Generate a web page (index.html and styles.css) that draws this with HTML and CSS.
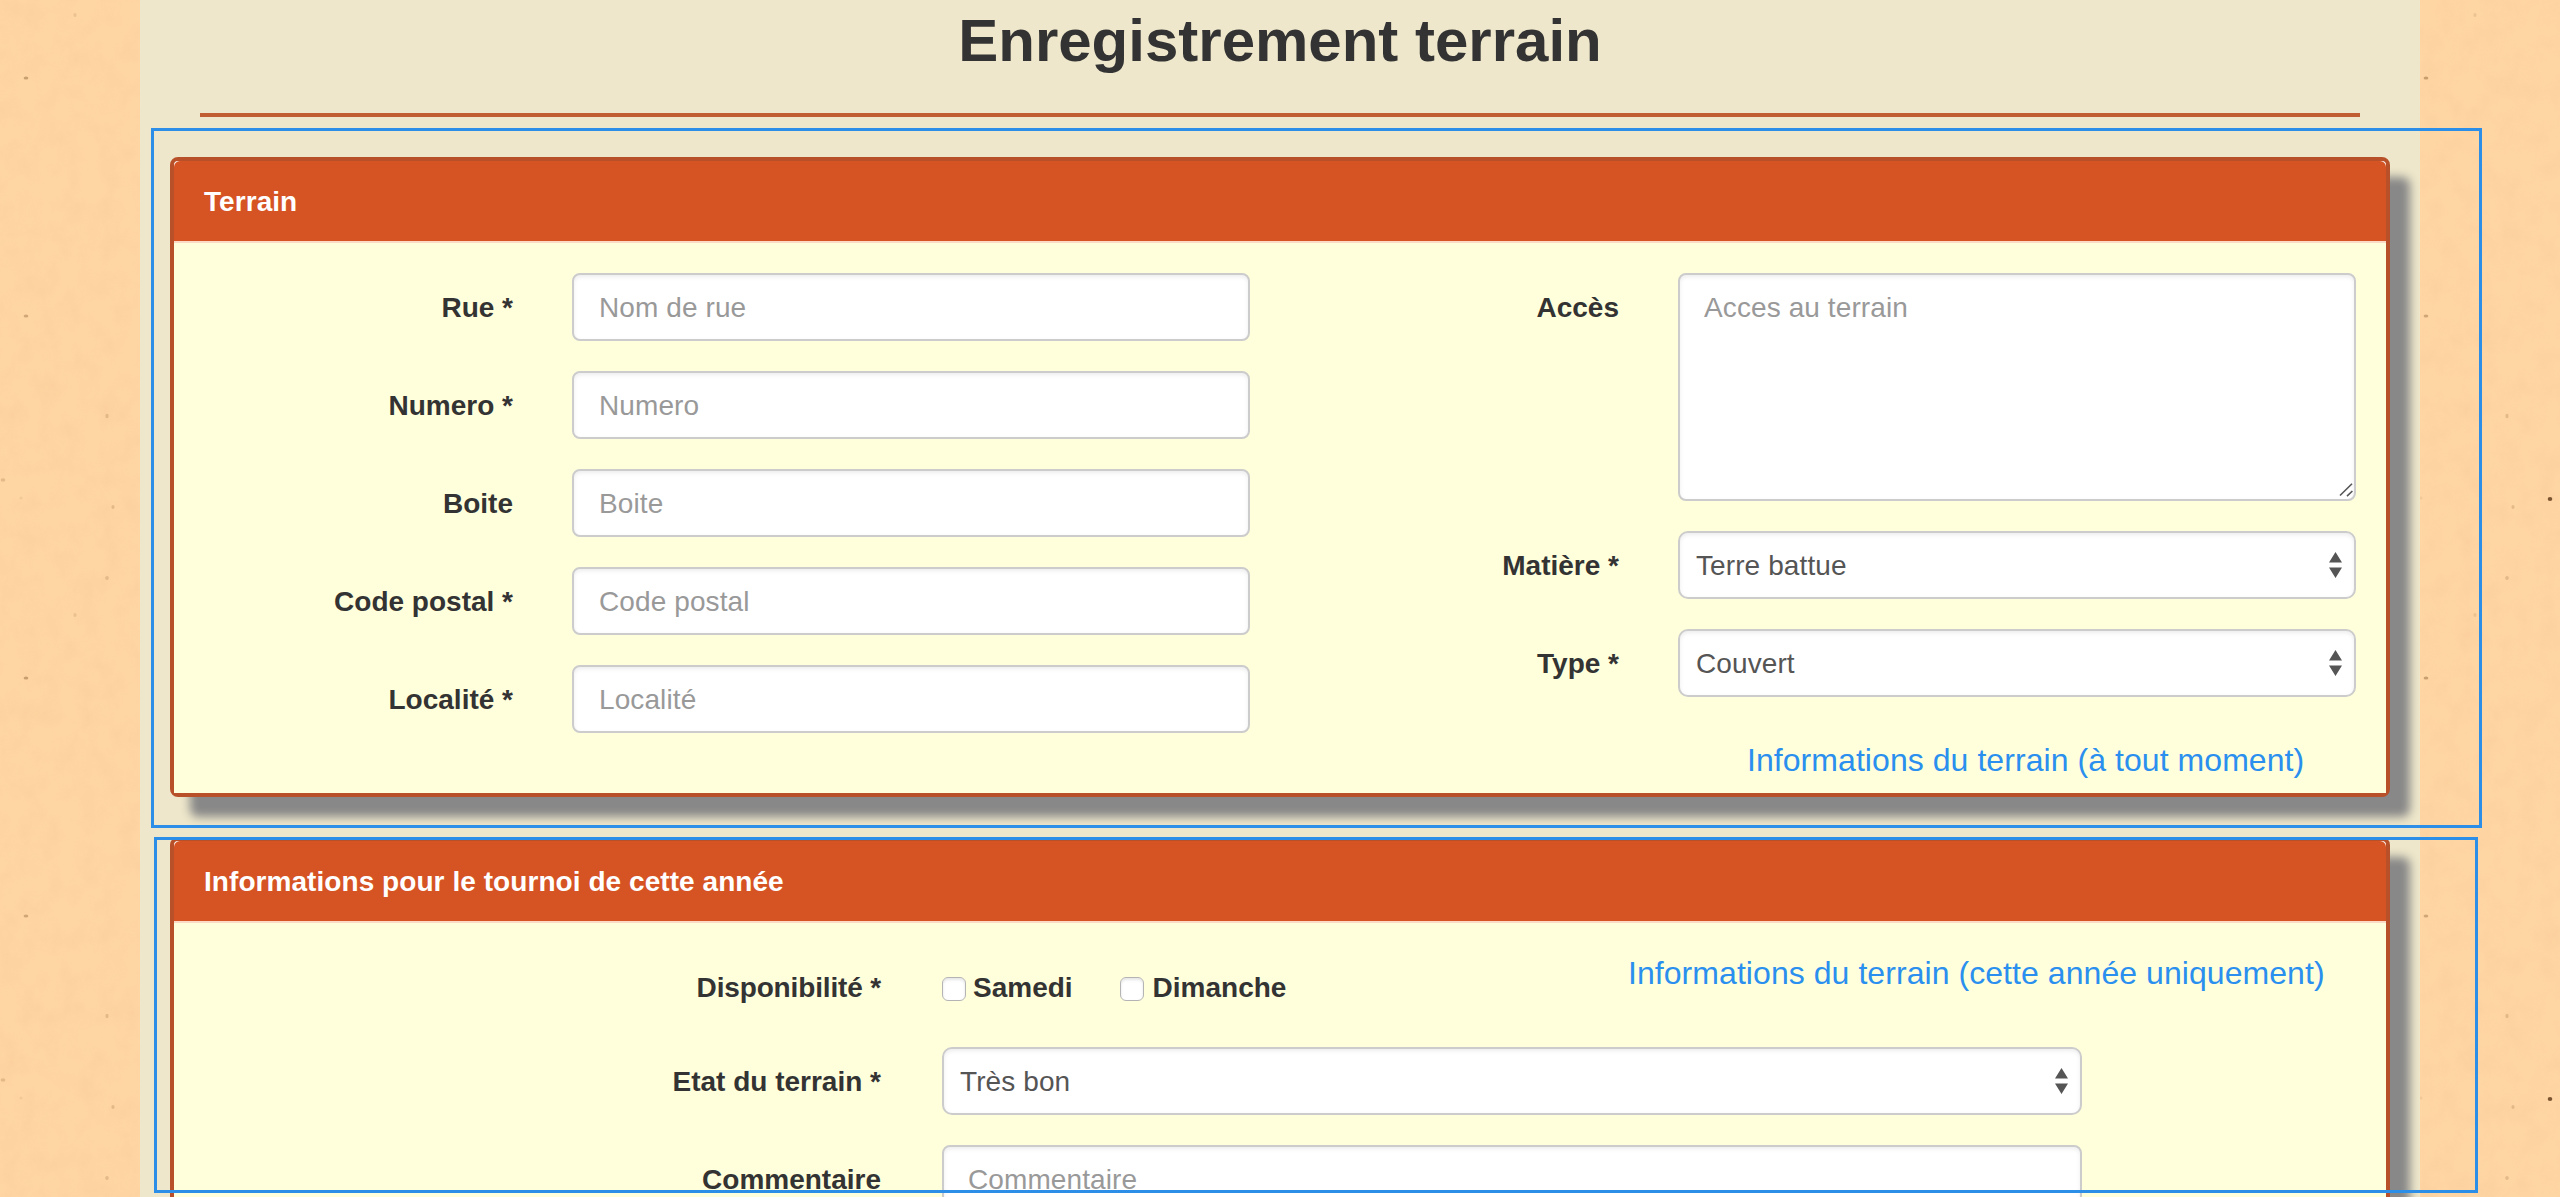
FILE: index.html
```html
<!DOCTYPE html>
<html lang="fr">
<head>
<meta charset="utf-8">
<title>Enregistrement terrain</title>
<link rel="stylesheet" href="styles.css">
</head>
<body>
<svg class="paper" width="2560" height="1197" aria-hidden="true">
  <defs>
    <filter id="grain" x="0" y="0" width="100%" height="100%" color-interpolation-filters="sRGB">
      <feTurbulence type="fractalNoise" baseFrequency="0.05 0.04" numOctaves="4" seed="8"/>
      <feColorMatrix values="0 0 0 0 0.92  0 0 0 0 0.66  0 0 0 0 0.46  1.1 0 0 0 -0.38"/>
    </filter>
    <pattern id="specks" width="2400" height="600" patternUnits="userSpaceOnUse">
      <g fill="#b3875a">
        <ellipse cx="26" cy="78" rx="2.4" ry="1.6" opacity=".7"/>
        <ellipse cx="26" cy="316" rx="2.4" ry="1.6" opacity=".6"/>
        <ellipse cx="107" cy="416" rx="1.6" ry="2.2" opacity=".35"/>
        <ellipse cx="3" cy="480" rx="2.4" ry="1.8" opacity=".35"/>
        <ellipse cx="113" cy="507" rx="1.6" ry="2" opacity=".35"/>
        <ellipse cx="107" cy="578" rx="1.8" ry="2" opacity=".35"/>
        <ellipse cx="75" cy="15" rx="1.6" ry="2" opacity=".25"/>
        <ellipse cx="21" cy="498" rx="1.6" ry="1.6" opacity=".15"/>
      </g>
      <ellipse cx="150" cy="499" rx="2.3" ry="2.1" fill="#7b5431"/>
    </pattern>
  </defs>
  <rect width="2560" height="1197" filter="url(#grain)" opacity=".17"/>
  <rect width="2560" height="1197" fill="url(#specks)"/>
</svg>

<main class="container">
  <h2 class="title"><span>Enregistrement terrain</span></h2>

  <section class="panel">
    <h3 class="panel-heading">Terrain</h3>
    <div class="panel-body two-columns">
      <div class="fields">
        <div class="field"><label for="rue">Rue *</label><input class="control" id="rue" placeholder="Nom de rue"></div>
        <div class="field"><label for="numero">Numero *</label><input class="control" id="numero" placeholder="Numero"></div>
        <div class="field"><label for="boite">Boite</label><input class="control" id="boite" placeholder="Boite"></div>
        <div class="field"><label for="cp">Code postal *</label><input class="control" id="cp" placeholder="Code postal"></div>
        <div class="field"><label for="localite">Localité *</label><input class="control" id="localite" placeholder="Localité"></div>
      </div>
      <div class="fields">
        <div class="field">
          <label for="acces">Accès</label>
          <div class="wrap">
            <textarea class="control area" id="acces" placeholder="Acces au terrain"></textarea>
            <svg class="grip" width="14" height="14" viewBox="0 0 14 14"><path d="M1 12.5 13 .8M8 13.2l5.4-5.2"/></svg>
          </div>
        </div>
        <div class="field">
          <label for="matiere">Matière *</label>
          <div class="wrap">
            <select class="control select" id="matiere"><option>Terre battue</option></select>
            <svg class="arrows" width="13" height="26" viewBox="0 0 13 26"><path d="M0 10.5 6.5 0 13 10.5zM0 15.500h13L6.500 26z"/></svg>
          </div>
        </div>
        <div class="field">
          <label for="type">Type *</label>
          <div class="wrap">
            <select class="control select" id="type"><option>Couvert</option></select>
            <svg class="arrows" width="13" height="26" viewBox="0 0 13 26"><path d="M0 10.5 6.5 0 13 10.5zM0 15.500h13L6.500 26z"/></svg>
          </div>
        </div>
      </div>
    </div>
  </section>

  <section class="panel">
    <h3 class="panel-heading">Informations pour le tournoi de cette année</h3>
    <div class="panel-body">
      <div class="fields wide">
        <div class="field checks">
          <span class="label">Disponibilité *</span>
          <div class="options">
            <label class="option"><input type="checkbox" class="box">Samedi</label>
            <label class="option sunday"><input type="checkbox" class="box">Dimanche</label>
          </div>
        </div>
        <div class="field">
          <label for="etat">Etat du terrain *</label>
          <div class="wrap">
            <select class="control select" id="etat"><option>Très bon</option></select>
            <svg class="arrows" width="13" height="26" viewBox="0 0 13 26"><path d="M0 10.5 6.5 0 13 10.5zM0 15.500h13L6.500 26z"/></svg>
          </div>
        </div>
        <div class="field">
          <label for="commentaire">Commentaire</label>
          <textarea class="control area" id="commentaire" placeholder="Commentaire"></textarea>
        </div>
      </div>
    </div>
  </section>
</main>

<div class="frame frame-permanent"></div>
<div class="frame frame-yearly"></div>
<p class="note note-permanent">Informations du terrain (à tout moment)</p>
<p class="note note-yearly">Informations du terrain (cette année uniquement)</p>
</body>
</html>
```

FILE: styles.css
```css
* { box-sizing: border-box; }

html, body {
  margin: 0;
  height: 1197px;
  overflow: hidden;
}

body {
  position: relative;
  background: #fed6a4;
  color: #333;
  font: 28px/40px "Liberation Sans", Arial, sans-serif;
}

.paper { position: absolute; top: 0; left: 0; }

.container {
  position: relative;
  width: 2280px;
  height: 1197px;
  margin: 0 auto;
  padding: 0 30px;
  background: #eee7cb;
  overflow: hidden;
}

.title {
  margin: 0 30px 40px;
  height: 117px;
  padding-top: 8px;
  border-bottom: 4px solid #c05d31;
  text-align: center;
  font-size: 60px;
  line-height: 66px;
  font-weight: bold;
}

/* Panels */
.panel {
  height: 640px;
  margin-bottom: 40px;
  border: 4px solid #b85029;
  border-radius: 8px;
  background: #fff;
  box-shadow: 20px 20px 10px #888;
}

.panel-heading {
  margin: 0;
  height: 82px;
  padding: 21px 30px 19px;
  border-bottom: 2px solid #fbdac6;
  border-radius: 6px 6px 0 0;
  background: #d65323;
  color: #fff;
  font-size: 28px;
  line-height: 40px;
  letter-spacing: .06px;
}

.panel-body {
  height: 550px;
  padding: 30px;
  background: #ffffdc;
}

.two-columns {
  display: grid;
  grid-template-columns: 1046px 1046px;
  column-gap: 60px;
}

/* Form rows */
.fields { display: flex; flex-direction: column; gap: 30px; }

.field {
  display: grid;
  grid-template-columns: 309px 678px;
  column-gap: 59px;
  align-items: start;
}

.wide .field { grid-template-columns: 677px 1140px; column-gap: 61px; }

.field > label, .label {
  padding-top: 15px;
  text-align: right;
  font-weight: bold;
}

.control {
  display: block;
  width: 100%;
  height: 68px;
  margin: 0;
  padding: 13px 24px 11px 25px;
  border: 2px solid #ccc;
  border-radius: 8px;
  background: #fff;
  box-shadow: inset 0 2px 4px rgba(0, 0, 0, .075);
  color: #555;
  font: 28px/40px "Liberation Sans", Arial, sans-serif;
  letter-spacing: .1px;
  outline: none;
}

.control::placeholder { color: #999; opacity: 1; }

.area { height: 228px; padding-left: 24px; resize: none; overflow: hidden; }

.select { appearance: none; padding: 13px 16px 11px; border-radius: 10px; }

.wrap { position: relative; }

.arrows { position: absolute; right: 14px; top: 21px; fill: #555; }

.grip {
  position: absolute;
  right: 3px;
  bottom: 4px;
  fill: none;
  stroke: #555;
  stroke-width: 1.6;
}

.checks { height: 94px; margin-bottom: -30px; }
.checks .label { letter-spacing: -.15px; }

.options { display: flex; padding-top: 15px; gap: 47px; }
.option { display: flex; font-weight: bold; }

.box {
  appearance: none;
  width: 24px;
  height: 24px;
  margin: 9px 7px 0 0;
  border: 1px solid #b4b4b4;
  border-radius: 6px;
  background: #fff;
  box-shadow: inset 0 2px 3px rgba(0, 0, 0, .1);
}

.sunday .box { margin-right: 9px; }

/* Annotations laid over the form */
.frame { position: absolute; border: 3px solid #2d8ee8; }
.frame-permanent { left: 151px; top: 128px; width: 2331px; height: 700px; }
.frame-yearly { left: 154px; top: 837px; width: 2324px; height: 356px; }

.note {
  position: absolute;
  margin: 0;
  color: #2a8fee;
  font-size: 32px;
  line-height: 40px;
  letter-spacing: .06px;
  white-space: nowrap;
}
.note-permanent { left: 1747px; top: 740px; }
.note-yearly { left: 1628px; top: 953px; }
```
